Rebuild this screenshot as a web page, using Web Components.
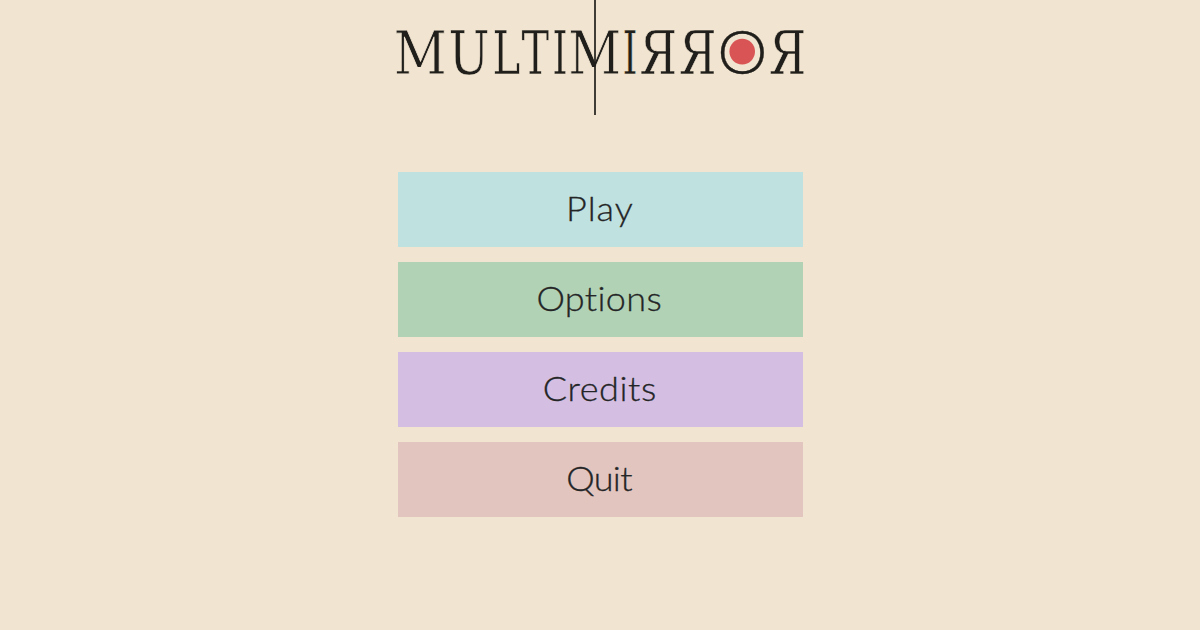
<!DOCTYPE html>
<html lang="en">
<head>
<meta charset="utf-8">
<title>Multimirror</title>
<style>
html, body { margin: 0; height: 100%; background: #f1e4d0; overflow: hidden; }
</style>
</head>
<body>
<main-menu></main-menu>
<script>
const measure = document.createElement('canvas').getContext('2d');

// Logo word: every letter is fitted to its own ink box.
class GameLogo extends HTMLElement {
  connectedCallback() {
    const root = this.attachShadow({ mode: 'open' });
    root.innerHTML = `<style>
      :host { display: block; width: 408px; height: 115px; }
      svg { display: block; overflow: visible; }
    </style>
    <svg width="408" height="115" viewBox="396 0 408 115" role="img">
      <text y="73.8" fill="#201f1b" stroke="#f1e4d0" stroke-width=".5"></text>
      <circle cx="742.2" cy="51.6" r="12.8" fill="#d95555"/>
      <path d="M595 0V115" stroke="#201f1b" stroke-width="1.7"/>
    </svg>`;
    const serif = '60.2px "DejaVu Serif", serif';
    const round = '300 61.5px Lato, sans-serif';
    const letters = [['M',396,444.5],['U',450,488],['L',494.5,519.5],['T',521.5,549],['I',554.3,566],['M',570.7,619.3],['I',624.3,635.7],['Я',641,675],['Я',680.5,714.5],['O',720.3,764.7],['Я',770.5,804.2]];
    const text = root.querySelector('text');
    for (const [ch, left, right] of letters) {
      const font = ch === 'O' ? round : serif;
      measure.font = font;
      const m = measure.measureText(ch);
      const scale = (right - left) / (m.actualBoundingBoxRight + m.actualBoundingBoxLeft);
      const span = document.createElementNS('http://www.w3.org/2000/svg', 'tspan');
      span.textContent = ch;
      span.style.font = font;
      if (ch === 'M') span.setAttribute('stroke-width', '.9');
      if (ch === 'O') { span.setAttribute('stroke', '#201f1b'); span.setAttribute('stroke-width', '.3'); }
      span.setAttribute('x', left + m.actualBoundingBoxLeft * scale);
      span.setAttribute('textLength', m.width * scale);
      span.setAttribute('lengthAdjust', 'spacingAndGlyphs');
      text.append(span);
    }
  }
}
customElements.define('game-logo', GameLogo);

class MenuButton extends HTMLElement {
  connectedCallback() {
    this.attachShadow({ mode: 'open' }).innerHTML = `<style>
      :host { display: block; }
      button { display: flex; align-items: center; justify-content: center; width: 100%; height: 75px; border: 0; padding: 0 1px 4px 0; background: var(--fill);
        font: 300 34px/40px Lato, sans-serif; letter-spacing: var(--track, 1px); color: #242526; -webkit-text-stroke: .3px #242526; }
      span { display: block; margin-right: calc(-1 * var(--track, 1px)); transform: scaleX(1.06); }
    </style><button><span><slot></slot></span></button>`;
  }
}
customElements.define('menu-button', MenuButton);

class MainMenu extends HTMLElement {
  connectedCallback() {
    this.attachShadow({ mode: 'open' }).innerHTML = `<style>
      :host { display: flex; flex-direction: column; align-items: center; height: 630px; background: #f1e4d0; }
      nav { display: grid; gap: 15px; width: 405px; margin-top: 57px; }
    </style>
    <game-logo></game-logo>
    <nav>
      <menu-button style="--fill:#bfe1df;--track:.9px">Play</menu-button>
      <menu-button style="--fill:#b2d2b5;--track:.3px">Options</menu-button>
      <menu-button style="--fill:#d4bfe2;--track:.5px">Credits</menu-button>
      <menu-button style="--fill:#e2c5bf;--track:-.6px">Quit</menu-button>
    </nav>`;
  }
}
customElements.define('main-menu', MainMenu);
</script>
</body>
</html>
